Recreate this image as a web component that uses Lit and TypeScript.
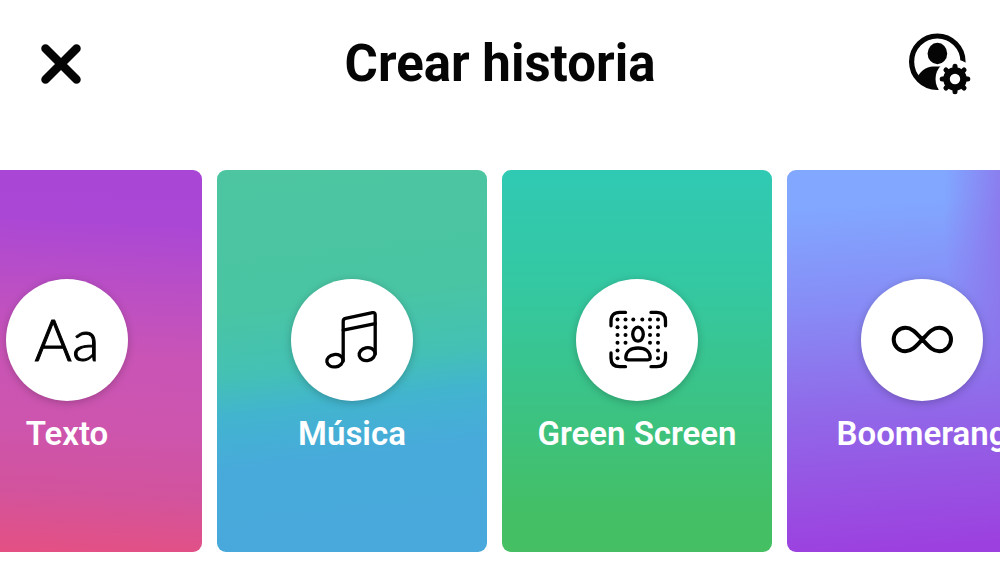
import { LitElement, html, css, svg } from "lit";
import { customElement, property, query } from "lit/decorators.js";

type StoryKind = "text" | "music" | "green" | "boomerang";

const STORIES: { kind: StoryKind; label: string }[] = [
  { kind: "text", label: "Texto" },
  { kind: "music", label: "Música" },
  { kind: "green", label: "Green Screen" },
  { kind: "boomerang", label: "Boomerang" },
];

const DOT_ROWS: { y: number; xs: number[] }[] = [
  { y: 40.5, xs: [41.5, 49.5, 57.3, 66.3, 74, 82] },
  { y: 48.3, xs: [41.5, 49.5, 74, 82] },
  { y: 56, xs: [41.5, 49.5, 74, 82] },
  { y: 63.7, xs: [41.5, 49.5, 74, 82] },
  { y: 71.4, xs: [41.5, 82] },
  { y: 79.2, xs: [41.5, 82] },
];

const musicIcon = svg`
  <path d="M52.200 82V42.200q0-2.400 2.400-2.900L81.500 33.700q2.700-.5 2.700 2.200V75" />
  <path d="M52.200 51.200L84.200 44.600" />
  <ellipse cx="43.900" cy="81.700" rx="8.100" ry="6.200" transform="rotate(-8 43.9 81.7)" />
  <ellipse cx="76.100" cy="75.100" rx="8" ry="6.400" transform="rotate(-12 76.1 75.1)" />`;

const greenIcon = svg`
  <path d="M35 46.800V42q0-8.600 8.600-8.600H49.500M75 33.400H80.800q8.700 0 8.700 8.600V46.800M89.500 74V79q0 8.700-8.700 8.700H75M49.500 87.700H43.600q-8.600 0-8.600-8.700V74" />
  <ellipse cx="62" cy="55.200" rx="5.300" ry="7" />
  <path d="M52 80.800H72q2.200 0 2.200-2.200C74.200 72.500 69.200 69 62 69S49.800 72.500 49.800 78.600q0 2.200 2.200 2.200Z" />
  <g class="dots">
    ${DOT_ROWS.map((r) => r.xs.map((x) => svg`<circle cx=${x} cy=${r.y} r="2" />`))}
  </g>`;

const boomerangIcon = svg`
  <path class="bold" d="M61.300 60.500C56 55 51.500 48.700 44.500 48.700a11.800 11.800 0 0 0 0 23.600C51.500 72.300 56 66 61.300 60.500S71 48.700 78.200 48.700a11.800 11.800 0 0 1 0 23.600C71 72.300 66.600 66 61.300 60.500Z" />`;

@customElement("story-card")
export class StoryCard extends LitElement {
  @property() kind: StoryKind = "text";
  @property() label = "";

  static styles = css`
    :host {
      display: block;
      flex: none;
      width: 270px;
    }
    .card {
      display: flex;
      flex-direction: column;
      align-items: center;
      gap: 13px;
      box-sizing: border-box;
      width: 100%;
      min-height: 382px;
      margin: 0;
      padding: 109px 0 98px;
      border: 0;
      border-radius: 9px;
      color: #fff;
      font: 600 33px/40px Roboto, sans-serif;
      white-space: nowrap;
      cursor: pointer;
    }
    .text {
      background: linear-gradient(3deg, #e55081 0%, #d2539d 17%, #cd55ae 34%, #c954b6 52%, #bb4fc4 68%, #aa47d5 86%, #a946d6 100%);
    }
    .music {
      background: linear-gradient(173deg, #4dc5a1 0%, #49c5a3 34%, #44c1b4 50%, #42b4cf 60%, #48aadb 73%, #49a8dc 100%);
    }
    .green {
      background: linear-gradient(180deg, #30c9b3 0%, #34c8a2 30%, #3bc386 60%, #43bf67 88%, #45bf62 100%);
    }
    .boomerang {
      background:
        radial-gradient(42% 62% at 100% 12%, #8f6ae8 30%, #8f6ae800 100%),
        linear-gradient(176deg, #81a7ff 10%, #878df6 34%, #906ae9 60%, #9850e2 83%, #9c40df 97%);
    }
    .disc {
      display: flex;
      align-items: center;
      justify-content: center;
      width: 122px;
      height: 122px;
      border-radius: 50%;
      background: #fff;
      color: #000;
      box-shadow: 0 2px 8px rgba(0, 0, 0, 0.22);
    }
    .letters {
      padding-bottom: 3px;
      font: 300 57px/64px Lato, sans-serif;
      -webkit-text-stroke: 1px #000;
    }
    .icon {
      width: 100%;
      height: 100%;
      fill: none;
      stroke: #000;
      stroke-width: 3.3;
      stroke-linecap: round;
      stroke-linejoin: round;
    }
    .bold {
      stroke-width: 4;
    }
    .dots {
      fill: #000;
      stroke: none;
    }
  `;

  private renderIcon() {
    if (this.kind === "text") return html`<span class="letters" aria-hidden="true">Aa</span>`;
    const shape =
      this.kind === "music" ? musicIcon : this.kind === "green" ? greenIcon : boomerangIcon;
    return html`<svg class="icon" viewBox="0 0 122 122" aria-hidden="true">${shape}</svg>`;
  }

  render() {
    return html`
      <button class="card ${this.kind}" type="button">
        <span class="disc">${this.renderIcon()}</span>
        <span>${this.label}</span>
      </button>
    `;
  }
}

@customElement("app-root")
export class AppRoot extends LitElement {
  @query(".strip") private strip!: HTMLElement;

  static styles = css`
    :host {
      display: block;
      min-height: 100vh;
      background: #fff;
      color: #050505;
      font-family: Roboto, sans-serif;
    }
    .bar {
      display: grid;
      grid-template-columns: 64px 1fr 64px;
      align-items: start;
      padding: 31px 29px 73px;
    }
    .title {
      margin: 0;
      text-align: center;
      font-size: 51px;
      font-weight: 700;
      line-height: 66px;
    }
    .tool {
      display: block;
      width: 64px;
      height: 64px;
      padding: 0;
      border: 0;
      background: none;
      color: inherit;
      cursor: pointer;
    }
    .glyph {
      display: block;
      width: 64px;
      height: 64px;
    }
    .strip {
      display: flex;
      gap: 15px;
      padding-bottom: 18px;
      overflow-x: auto;
      scrollbar-width: none;
    }
  `;

  firstUpdated() {
    this.strip.scrollLeft = 68;
  }

  render() {
    return html`
      <header class="bar">
        <button class="tool" type="button" aria-label="Cerrar">
          <svg class="glyph" viewBox="0 0 64 64" aria-hidden="true">
            <path d="M16.500 17.500L47.500 48.500M47.500 17.500L16.500 48.500" fill="none" stroke="currentColor" stroke-width="8.500" stroke-linecap="round" />
          </svg>
        </button>
        <h1 class="title">Crear historia</h1>
        <button class="tool" type="button" aria-label="Configuración de historias">
          <svg class="glyph" viewBox="0 0 64 64" aria-hidden="true">
            <defs>
              <mask id="cut">
                <rect width="64" height="64" fill="#fff" />
                <circle cx="48" cy="48" r="19.500" fill="#000" />
              </mask>
              <clipPath id="face"><circle cx="30.300" cy="31" r="27" /></clipPath>
            </defs>
            <g mask="url(#cut)">
              <circle cx="30.300" cy="30.700" r="25.700" fill="none" stroke="currentColor" stroke-width="5.200" />
              <path clip-path="url(#face)" d="M8 50C13 39.500 19 36 26 35.500H40V60H20Z" fill="currentColor" />
            </g>
            <ellipse cx="30.400" cy="22.500" rx="9.800" ry="10.700" fill="currentColor" />
            <circle cx="48" cy="48" r="8.500" fill="none" stroke="currentColor" stroke-width="6.600" />
            <g stroke="currentColor" stroke-width="5" stroke-linecap="round">
              ${[0, 45, 90, 135, 180, 225, 270, 315].map(
                (a) => svg`<path d="M48 38V35.200" transform="rotate(${a} 48 48)" />`
              )}
            </g>
          </svg>
        </button>
      </header>
      <main class="strip">
        ${STORIES.map((s) => html`<story-card .kind=${s.kind} .label=${s.label}></story-card>`)}
      </main>
    `;
  }
}
